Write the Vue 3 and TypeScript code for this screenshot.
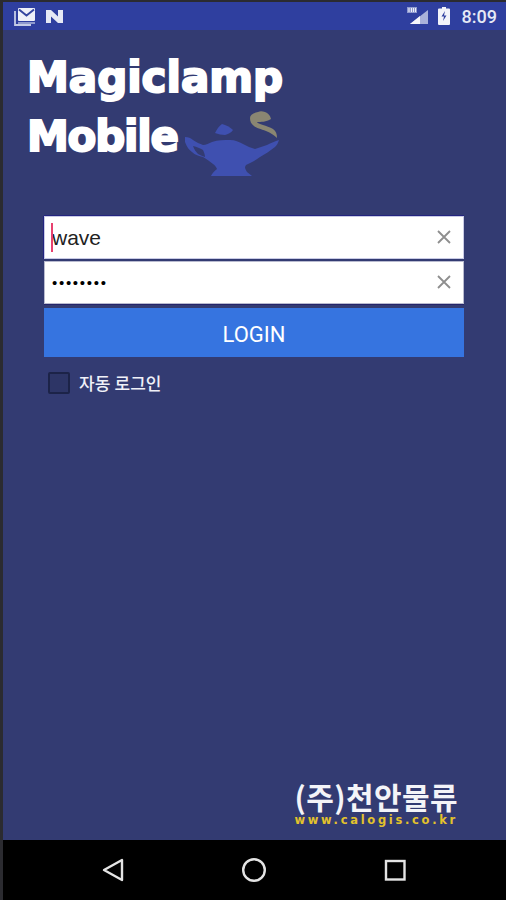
<script setup lang="ts">
import { ref } from "vue";

const userId = ref("wave")
const password = ref("••••••••")
</script>

<template>
  <div class="screen">
    <div class="status-bar">
      <div class="status-left">
        <svg width="22" height="19" viewBox="0 0 22 19">
          <path d="M1 4v14h16" fill="none" stroke="#c5cce6" stroke-width="1.800" />
          <rect x="4" y="1" width="17" height="13" rx="1" fill="#eef0f8" />
          <path d="M5 2.500l7.500 6 7.500-6" fill="none" stroke="#34459f" stroke-width="2" />
          <path d="M4 16h17" stroke="#a9b2da" stroke-width="1.600" />
        </svg>
        <svg width="19" height="15" viewBox="0 0 19 15">
          <path d="M1 1h5l7 6.500V1h5v13h-5L6 7.500V14H1z" fill="#e6e9f5" />
        </svg>
      </div>
      <div class="status-right">
        <svg width="22" height="18" viewBox="0 0 22 18">
          <path d="M3 17L21 3v14z" fill="#aab2da" />
          <path d="M3 17l10-8v8z" fill="#f5f6fb" />
          <path d="M0 0h10v6H0z" fill="#8f9ad0" />
          <path d="M2 1v4M4.500 1v4M6.500 1v4M8.500 1v4" stroke="#eef0f8" stroke-width="1" />
        </svg>
        <svg class="ic-bat" width="12" height="18" viewBox="0 0 12 18">
          <path d="M4 0h4v1.500h3a1 1 0 0 1 1 1V17a1 1 0 0 1-1 1H1a1 1 0 0 1-1-1V2.500a1 1 0 0 1 1-1h3z" fill="#f2f3fa" />
          <path d="M7 4L3.500 9.500H6L5 14l3.500-5.500H6z" fill="#2f3f9f" />
        </svg>
        <span class="clock">8:09</span>
      </div>
    </div>

    <main class="content">
      <div class="logo">
        <div class="logo-line first">Magiclamp</div>
        <div class="logo-line second">Mobile</div>
        <svg class="lamp" width="96" height="72" viewBox="0 0 96 72">
          <path d="M73 2C68 3 65 5 65 8c0 3 1 6 4 8 2 2 7 3 12 5 5 2 8 4 11 7 0-4-1-7-4-9-3-2-7-3-10-4-3-1-6-2-6-3 4 0 9 0 14-3-1-4-3-6-6-7-3-1-5-1-7 0z" fill="#8a8672" />
          <path d="M30 23c2-4 4-7 7-9 4 1 8 3 11 6-2 3-5 4-8 5-3 0-7-1-10-2z" fill="#3f50b0" />
          <path d="M0 27c3 0 6 1 8 3 3 2 7 4 10 5 3 0 6-2 9-3 6-2 12-2 18-2 5 0 9 2 13 4 4 2 8 4 12 5 4-1 8-3 12-4 4-2 8-4 12-5-1 3-2 5-4 7-5 4-10 7-15 10-4 3-9 6-14 8l-1 2c0 2 1 3 2 5l5 4H26c1-2 3-5 6-7-1-2-2-4-4-5-3-2-6-5-10-7-4-1-8-2-11-5-3-2-5-5-7-10 0-2 0-4 0-5z" fill="#3f50b0" />
          <path d="M8 36c4 1 7 2 10 4 1 2 2 5 2 7-3-1-5-2-7-3-2-2-4-5-5-8z" fill="#333b72" />
        </svg>
      </div>

      <form class="login-form" @submit.prevent>
        <div class="field focused">
          <i class="caret"></i>
          <input v-model="userId" class="field-input" type="text" />
          <svg class="clear" width="16" height="16" viewBox="0 0 16 16">
            <path d="M2 2l12 12M14 2L2 14" stroke="#8e8e8e" stroke-width="1.800" />
          </svg>
        </div>
        <div class="field second-field">
          <input v-model="password" class="field-input dots" type="text" />
          <svg class="clear" width="16" height="16" viewBox="0 0 16 16">
            <path d="M2 2l12 12M14 2L2 14" stroke="#8e8e8e" stroke-width="1.800" />
          </svg>
        </div>
        <button class="login-btn" type="submit">LOGIN</button>
        <label class="auto-login">
          <span class="check"></span>
          <span class="auto-text">자동 로그인</span>
        </label>
      </form>

      <div class="brand">
        <div class="brand-name">(주)천안물류</div>
        <div class="brand-url">www.calogis.co.kr</div>
      </div>
    </main>

    <nav class="nav-bar">
      <svg width="24" height="26" viewBox="0 0 24 26">
        <path d="M21 3v20L3 13z" fill="none" stroke="#e4e4e4" stroke-width="2.400" stroke-linejoin="round" />
      </svg>
      <svg width="26" height="26" viewBox="0 0 26 26">
        <circle cx="13" cy="13" r="10.800" fill="none" stroke="#e4e4e4" stroke-width="2.400" />
      </svg>
      <svg width="24" height="24" viewBox="0 0 24 24">
        <rect x="3" y="3" width="18.500" height="18.500" fill="none" stroke="#e4e4e4" stroke-width="2.400" />
      </svg>
    </nav>
  </div>
</template>

<style>
html, body {
  margin: 0;
  background: #2b2b30;
}
</style>

<style scoped>
.screen {
  width: 506px;
  height: 900px;
  box-sizing: border-box;
  display: flex;
  flex-direction: column;
  padding: 2px 0 0 3px;
  font-family: Roboto, "Noto Sans CJK KR", sans-serif;
  overflow: hidden;
}

.status-bar {
  height: 28px;
  flex: none;
  background: #2f3f9f;
  display: flex;
  align-items: center;
  justify-content: space-between;
  padding: 0 9px 0 11px;
  color: #e6e9f5;
}

.status-left,
.status-right {
  display: flex;
  align-items: center;
}

.status-left {
  gap: 9px;
}

.ic-bat {
  margin-left: 9px;
}

.clock {
  margin-left: 12px;
  font-size: 18px;
  font-weight: 500;
}

.content {
  flex: 1;
  background: #333b72;
  display: flex;
  flex-direction: column;
}

.logo {
  position: relative;
  height: 156px;
  padding: 18px 0 0 24px;
  box-sizing: border-box;
  color: #fff;
  font-family: "DejaVu Sans", sans-serif;
  font-weight: 700;
  -webkit-text-stroke: 2px #fff;
}

.logo-line {
  font-size: 42px;
  line-height: 59px;
  white-space: nowrap;
}

.first {
  letter-spacing: 0;
}

.second {
  letter-spacing: -1.200px;
}

.lamp {
  position: absolute;
  left: 182px;
  top: 80px;
}

.login-form {
  margin: 30px 0 0 41px;
  width: 420px;
  display: flex;
  flex-direction: column;
}

.field {
  position: relative;
  height: 43px;
  box-sizing: border-box;
  background: #fff;
  display: flex;
  align-items: center;
  border: 1px solid #c9cbe6;
  box-shadow: 0 -1px 0 #23247f, -1px 0 0 #23247f;
}

.second-field {
  margin-top: 2px;
  border-color: #b9bbd0;
  box-shadow: 0 1px 0 #24246a;
}

.field-input {
  flex: 1;
  min-width: 0;
  height: 100%;
  border: 0;
  outline: 0;
  padding: 0 0 0 7px;
  background: transparent;
  font-family: "Liberation Sans", Roboto, sans-serif;
  font-size: 21px;
  color: #222;
}

.dots {
  font-size: 15px;
  letter-spacing: 1.700px;
  color: #000;
}

.caret {
  position: absolute;
  left: 6px;
  top: 6px;
  width: 2px;
  height: 29px;
  background: #e8416f;
}

.clear {
  flex: none;
  margin: 0 11px 2px 0;
}

.login-btn {
  margin-top: 4px;
  height: 49px;
  border: 0;
  background: #3674e0;
  color: #fff;
  font-family: Roboto, sans-serif;
  font-size: 22px;
  padding: 4px 0 0;
}

.auto-login {
  margin: 14px 0 0 4px;
  display: flex;
  align-items: center;
  gap: 9px;
  color: #f0f1f8;
  font-size: 17px;
  font-weight: 500;
  line-height: 22px;
}

.auto-text {
  padding-top: 2px;
}

.check {
  width: 18px;
  height: 18px;
  border: 2px solid #1c2348;
  border-radius: 2px;
  background: #2d3566;
}

.brand {
  margin-top: auto;
  padding: 0 48px 13px 0;
  display: flex;
  flex-direction: column;
  align-items: flex-end;
}

.brand-name {
  color: #f4f4f8;
  font-size: 30px;
  font-weight: 700;
  line-height: 34px;
  letter-spacing: 0.4px;
  font-family: "Noto Sans CJK KR", sans-serif;
}

.brand-url {
  color: #e3c22c;
  font-family: "DejaVu Sans", sans-serif;
  font-size: 11.500px;
  font-weight: 700;
  line-height: 14px;
  letter-spacing: 2.700px;
}

.nav-bar {
  height: 60px;
  flex: none;
  background: #000;
  display: flex;
  align-items: center;
  padding-left: 98px;
  gap: 116px;
}
</style>
